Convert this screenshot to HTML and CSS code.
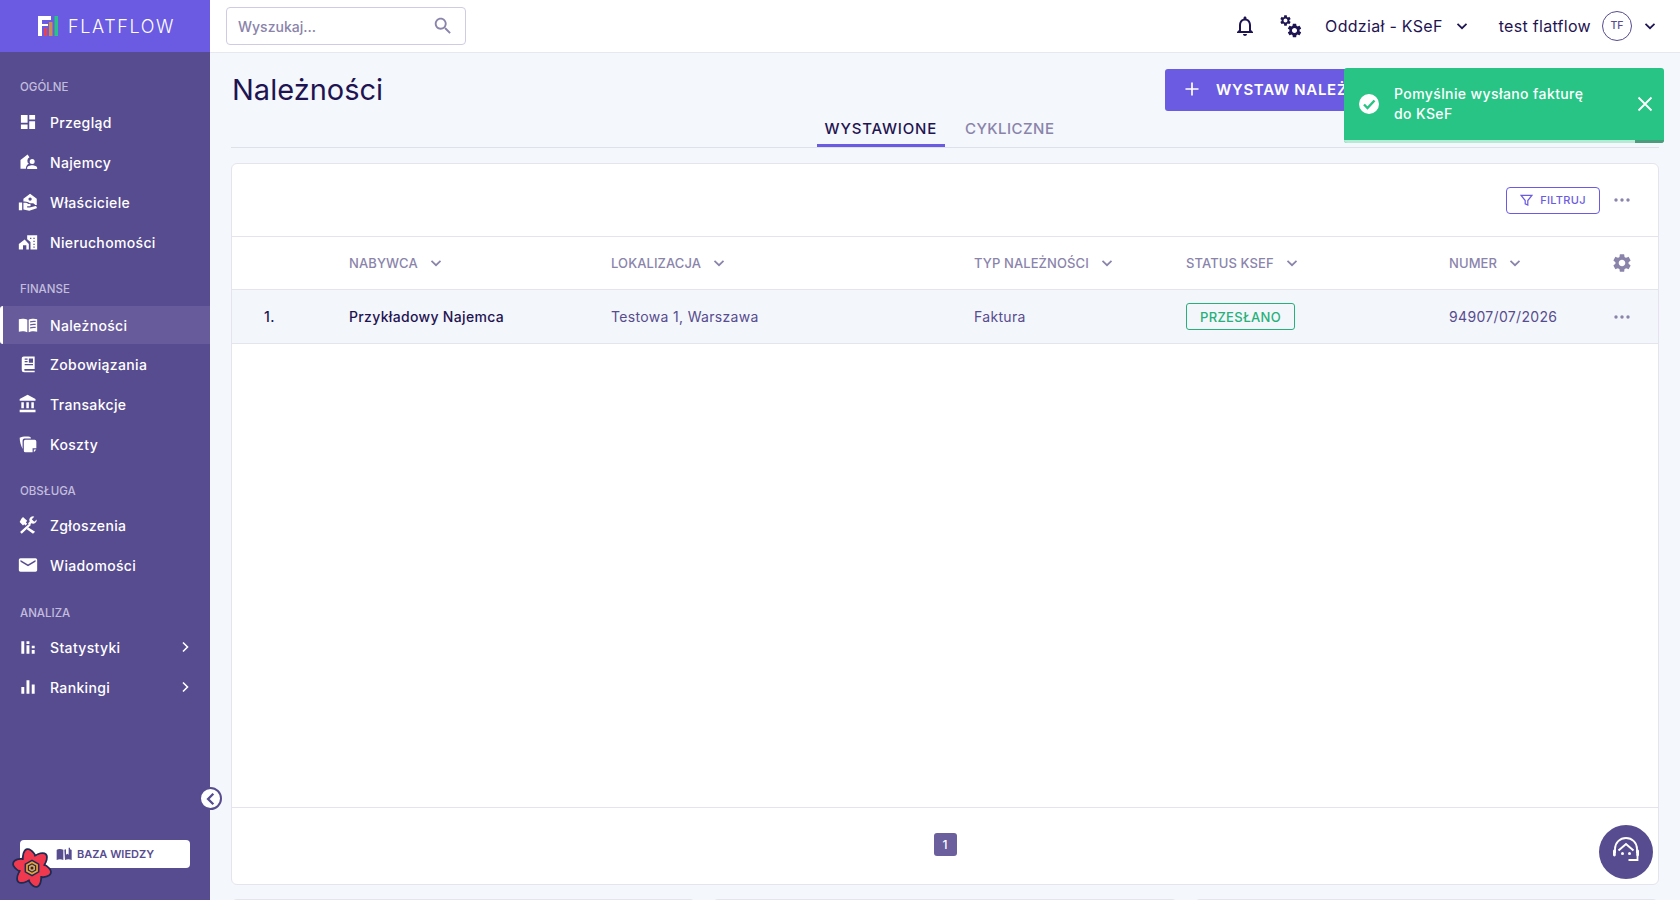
FILE: index.html
```html
<!DOCTYPE html>
<html lang="pl">
<head>
    <meta charset="UTF-8">
    <title>Flatflow - Należności</title>
    <link rel="stylesheet" href="styles.css">
</head>
<body>

<svg class="defs" width="0" height="0">
    <symbol id="gear" viewBox="0 0 24 24"><path fill-rule="evenodd" d="M19.14 12.94c.04-.3.06-.61.06-.94 0-.32-.02-.64-.07-.94l2.03-1.58c.18-.14.23-.41.12-.61l-1.92-3.32c-.12-.22-.37-.29-.59-.22l-2.39.96c-.5-.38-1.03-.7-1.62-.94l-.36-2.54c-.04-.24-.24-.41-.48-.41h-3.84c-.24 0-.43.17-.47.41l-.36 2.54c-.59.24-1.13.57-1.62.94l-2.39-.96c-.22-.08-.47 0-.59.22L2.74 8.87c-.12.21-.08.47.12.61l2.03 1.58c-.05.3-.09.63-.09.94s.02.64.07.94l-2.03 1.58c-.18.14-.23.41-.12.61l1.92 3.32c.12.22.37.29.59.22l2.39-.96c.5.38 1.03.7 1.62.94l.36 2.54c.05.24.24.41.48.41h3.84c.24 0 .44-.17.47-.41l.36-2.54c.59-.24 1.13-.56 1.62-.94l2.39.96c.22.08.47 0 .59-.22l1.92-3.32c.12-.22.07-.47-.12-.61l-2.01-1.58zM12 15.6c-1.98 0-3.6-1.62-3.6-3.6s1.62-3.6 3.6-3.6 3.6 1.62 3.6 3.6-1.62 3.6-3.6 3.6z"/></symbol>
    <symbol id="chev" viewBox="0 0 12 12"><path d="M1.500 3.800 6 8.200l4.500-4.400" fill="none" stroke="currentColor" stroke-width="1.700"/></symbol>
    <symbol id="dots" viewBox="0 0 16 4"><circle cx="2" cy="2" r="1.700"/><circle cx="8" cy="2" r="1.700"/><circle cx="14" cy="2" r="1.700"/></symbol>
    <symbol id="book" viewBox="0 0 24 24"><path d="M11.200 5.600C9 4.500 4 4 1 5.200V20c3-1 8-.8 10.200.8z"/><path fill-rule="evenodd" d="M12.800 5.600C15 4.500 20 4 23 5.200V20c-3-1-8-.8-10.200.8zM14.500 7.400v1.600c1.800-.7 4.500-.9 6.700-.5V7c-2.200-.4-4.900-.2-6.700.4zm0 3.600v1.600c1.800-.7 4.500-.9 6.700-.5v-1.500c-2.200-.4-4.900-.2-6.700.4zm0 3.600v1.600c1.800-.7 4.500-.9 6.700-.5v-1.500c-2.200-.4-4.900-.2-6.700.4z"/></symbol>
</svg>

<div class="app">
    <aside class="sidebar">
        <div class="logo">
            <svg class="logo-mark" width="20" height="20" viewBox="0 0 20 20">
                <path fill="#fff" d="M0 0h13v4H4v4h6v2H4v10H0z"/>
                <rect x="6" y="12" width="3" height="8" fill="#e8424f"/>
                <rect x="11" y="6" width="3.500" height="14" fill="#cf8a4c"/>
                <rect x="16.500" y="0" width="3.500" height="20" fill="#27c485"/>
            </svg>
            <span class="logo-text">FLATFLOW</span>
        </div>

        <nav class="nav">
            <div class="nav-label nav-label-first">OGÓLNE</div>
            <a class="nav-item">
                <svg class="nav-icon" viewBox="0 0 24 24"><path d="M3.500 3.500h8v9.500h-8zm0 11.500h8v5.500h-8zM13.500 3.500h7v5.500h-7zm0 7.500h7v9.500h-7z"/></svg>
                Przegląd
            </a>
            <a class="nav-item">
                <svg class="nav-icon" viewBox="0 0 24 24"><path d="M11.500 3 3 9.500V20h6.500c0-2.800 1.200-4.700 3.500-5.800a4.600 4.600 0 0 1 .8-7.800L11.500 3zM17 8.500a3 3 0 1 0 0 6 3 3 0 0 0 0-6zM11 20.500h12v-1.500c0-2-3.300-3.200-6-3.200s-6 1.200-6 3.200z"/></svg>
                Najemcy
            </a>
            <a class="nav-item">
                <svg class="nav-icon" viewBox="0 0 24 24"><path d="m14.500 2-8 6v3.500c3-.5 6 .5 7.500 2h3c1.500 0 3 .8 3.500 2h2V8zm0 4.500a2 2 0 1 1 0 4 2 2 0 0 1 0-4zM1 12.500h4V22H1zM6.500 13v8l7 1.500 9-3V18c-.5-1-1.500-1.200-2.500-1l-6 1.500h-3V17h3.500c1 0 1.200-2.500-.5-2.500h-1.500C11 13 9 12.500 6.500 13z"/></svg>
                Właściciele
            </a>
            <a class="nav-item">
                <svg class="nav-icon" viewBox="0 0 24 24"><path d="M8 9 1 14.500V21h5v-5h4v5h3v-6.500zM11 4v4.800l4 3.200v9h8V4zm3.500 3H16v1.500h-1.500zm4 0H20v1.500h-1.500zm0 3.500H20V12h-1.500zm0 3.500H20v1.500h-1.500zm0 3.500H20v1.500h-1.500z"/></svg>
                Nieruchomości
            </a>

            <div class="nav-label">FINANSE</div>
            <a class="nav-item active">
                <svg class="nav-icon" viewBox="0 0 24 24"><use href="#book"/></svg>
                Należności
            </a>
            <a class="nav-item">
                <svg class="nav-icon" viewBox="0 0 24 24"><path fill-rule="evenodd" d="M7 3h13v15H8.500c-1.500 0-1.500 2 0 2H20v2H7.500C5.500 22 4.500 21 4.500 19V5.500C4.500 4 5.500 3 7 3zm6 2.500v5h5v-5zm-5 0V7h3.500V5.500zm0 3V10h3.500V8.500zm0 3.500v1.500h10V12z"/></svg>
                Zobowiązania
            </a>
            <a class="nav-item">
                <svg class="nav-icon" viewBox="0 0 24 24"><path d="M4 10v7h3v-7H4zm6 0v7h3v-7h-3zM2 22h19v-3H2v3zm14-12v7h3v-7h-3zm-4.500-9L2 6v2h19V6l-9.500-5z"/></svg>
                Transakcje
            </a>
            <a class="nav-item">
                <svg class="nav-icon" viewBox="0 0 24 24"><path d="M9 7h11a2 2 0 0 1 2 2v8h-4.500v5H9a2 2 0 0 1-2-2V9a2 2 0 0 1 2-2zM19 18.500h3L19 22z"/><path d="M2 4.500C5 3 10 2.500 15 3.500L15.500 5.500H8C6 5.500 5.500 7 5.500 9v9C3.500 14 2 9 2 4.500z"/></svg>
                Koszty
            </a>

            <div class="nav-label">OBSŁUGA</div>
            <a class="nav-item">
                <svg class="nav-icon" viewBox="0 0 24 24"><path d="m4 4.500 2-2 5 4.500-1.500 2L11 10.500l-2 2-1.500-1.500L6 12.500 2 8.500zM14 10 2.500 20.500l2 2L15.500 12zM18 1.500a4.500 4.500 0 0 0-4 6.500l-2 2 2 2 2-2a4.500 4.500 0 0 0 6.500-4.500L19.500 8 16.500 5 19.500 2zM12.500 15l-2 2 7.500 5.500 2.500-2.500z"/></svg>
                Zgłoszenia
            </a>
            <a class="nav-item">
                <svg class="nav-icon" viewBox="0 0 24 24"><path d="M21 4H3c-1.100 0-2 .9-2 2v12c0 1.100.9 2 2 2h18c1.100 0 2-.9 2-2V6c0-1.100-.9-2-2-2zm0 4-9 5.500L3 8V6l9 5.500L21 6v2z"/></svg>
                Wiadomości
            </a>

            <div class="nav-label nav-label-last">ANALIZA</div>
            <a class="nav-item">
                <svg class="nav-icon" viewBox="0 0 24 24"><path d="M4 5h3.500v15H4zm6.200 5h3.500v10h-3.500zm0-5h3.500v3.500h-3.500zm6.300 5.500H20v3h-3.500zm0 5H20V20h-3.500z"/></svg>
                Statystyki
                <svg class="nav-arrow" width="12" height="12" viewBox="0 0 12 12"><path d="M4 1.500 8.500 6 4 10.500" fill="none" stroke="#fff" stroke-width="1.600"/></svg>
            </a>
            <a class="nav-item">
                <svg class="nav-icon" viewBox="0 0 24 24"><path d="M4 12h3.500v8H4zm6.200-8h3.500v16h-3.500zm6.300 5H20v11h-3.500z"/></svg>
                Rankingi
                <svg class="nav-arrow" width="12" height="12" viewBox="0 0 12 12"><path d="M4 1.500 8.500 6 4 10.500" fill="none" stroke="#fff" stroke-width="1.600"/></svg>
            </a>
        </nav>

        <button class="kb-btn">
            <svg width="16" height="16" viewBox="0 0 24 24"><path d="M1 6c2-1.500 6-2 10-.5V21c-3-1.500-7-1.500-10 0zm11.500-.5c.8-.3 1.700-.5 2.500-.6V13l2-1.500 2 1.500V2.500h2V5c.8.200 1.500.5 2.500 1v15c-3-1.500-7-1.500-10 0z"/></svg>
            BAZA WIEDZY
        </button>

        <button class="collapse-btn">
            <svg width="14" height="14" viewBox="0 0 12 12"><path d="M8 1.500 3.500 6 8 10.500" fill="none" stroke="#574c8f" stroke-width="2"/></svg>
        </button>

        <svg class="devtools" width="42" height="40" viewBox="-21 -20 42 40">
            <g fill="#f0384e" stroke="#1e2a52" stroke-width="1.800">
                <ellipse rx="19.500" ry="8" transform="rotate(15)"/>
                <ellipse rx="19.500" ry="8" transform="rotate(75)"/>
                <ellipse rx="19.500" ry="8" transform="rotate(135)"/>
            </g>
            <g fill="#f0384e">
                <ellipse rx="18" ry="6.800" transform="rotate(15)"/>
                <ellipse rx="18" ry="6.800" transform="rotate(75)"/>
                <ellipse rx="18" ry="6.800" transform="rotate(135)"/>
            </g>
            <path d="M0-8.500 7.400-4.200v8.400L0 8.500-7.400 4.200v-8.400z" fill="#1e2a52"/>
            <path d="M0-6.800 5.900-3.400v6.800L0 6.800-5.900 3.400v-6.800z" fill="#e9a33f"/>
            <path d="M0-4.800 4.200-2.400v4.800L0 4.800-4.200 2.400v-4.800z" fill="#1e2a52"/>
            <path d="M0-3.400 3-1.700v3.400L0 3.400-3 1.700v-3.400z" fill="#e9a33f"/>
            <circle r="1.500" fill="#1e2a52"/>
        </svg>
    </aside>

    <div class="main">
        <header class="topbar">
            <div class="search">
                <span>Wyszukaj...</span>
                <svg width="22" height="22" viewBox="0 0 24 24"><path d="M15.500 14h-.79l-.28-.27C15.410 12.590 16 11.110 16 9.500 16 5.910 13.090 3 9.500 3S3 5.910 3 9.500 5.910 16 9.500 16c1.610 0 3.090-.59 4.230-1.570l.27.280v.79l5 4.990L20.490 19l-4.990-5zm-6 0C7.010 14 5 11.990 5 9.500S7.010 5 9.500 5 14 7.010 14 9.500 11.990 14 9.500 14z"/></svg>
            </div>
            <div class="top-right">
                <svg class="bell" width="24" height="24" viewBox="0 0 24 24"><path d="M12 22c1.100 0 2-.9 2-2h-4c0 1.100.9 2 2 2zm6-6v-5c0-3.070-1.630-5.640-4.500-6.320V4c0-.83-.67-1.500-1.500-1.500s-1.500.67-1.500 1.500v.68C7.640 5.360 6 7.920 6 11v5l-2 2v1h16v-1l-2-2zm-2 1H8v-6c0-2.480 1.510-4.500 4-4.500s4 2.020 4 4.500v6z"/></svg>
                <span class="gears">
                    <svg class="gear-small" width="13" height="13"><use href="#gear"/></svg>
                    <svg class="gear-big" width="17" height="17"><use href="#gear"/></svg>
                </span>
                <span class="top-text branch">Oddział - KSeF</span>
                <svg class="top-chev" width="12" height="12"><use href="#chev"/></svg>
                <span class="top-text user">test flatflow</span>
                <span class="avatar">TF</span>
                <svg class="top-chev" width="12" height="12"><use href="#chev"/></svg>
            </div>
        </header>

        <div class="content">
            <div class="page-head">
                <h1>Należności</h1>
                <button class="primary-btn">
                    <svg width="16" height="16" viewBox="0 0 16 16"><path d="M8 1.500v13M1.500 8h13" stroke="#fff" stroke-width="1.700"/></svg>
                    WYSTAW NALEŻNOŚĆ
                </button>
            </div>

            <div class="tabs">
                <a class="tab active">WYSTAWIONE</a>
                <a class="tab">CYKLICZNE</a>
            </div>

            <section class="card">
                <div class="toolbar">
                    <button class="filter-btn">
                        <svg width="13" height="13" viewBox="0 0 14 14"><path d="M1.200 1.500h11.600L8.400 7v5l-2.800-1.400V7z" fill="none" stroke="#6a5be2" stroke-width="1.300"/></svg>
                        FILTRUJ
                    </button>
                    <svg class="dots" width="16" height="4"><use href="#dots"/></svg>
                </div>

                <div class="tbl-row tbl-head">
                    <div></div>
                    <div class="th">NABYWCA <svg width="12" height="12"><use href="#chev"/></svg></div>
                    <div class="th">LOKALIZACJA <svg width="12" height="12"><use href="#chev"/></svg></div>
                    <div class="th">TYP NALEŻNOŚCI <svg width="12" height="12"><use href="#chev"/></svg></div>
                    <div class="th">STATUS KSEF <svg width="12" height="12"><use href="#chev"/></svg></div>
                    <div class="th">NUMER <svg width="12" height="12"><use href="#chev"/></svg></div>
                    <div class="cell-action"><svg width="22" height="22"><use href="#gear"/></svg></div>
                </div>

                <div class="tbl-row tbl-body">
                    <div class="td-strong">1.</div>
                    <div class="td-strong">Przykładowy Najemca</div>
                    <div>Testowa 1, Warszawa</div>
                    <div>Faktura</div>
                    <div><span class="badge">PRZESŁANO</span></div>
                    <div>94907/07/2026</div>
                    <div class="cell-action"><svg width="16" height="4"><use href="#dots"/></svg></div>
                </div>

                <div class="tbl-empty"></div>

                <div class="pager"><span class="page-num">1</span></div>
            </section>

            <div class="bottom-cards">
                <div class="mini-card"></div>
                <div class="mini-card"></div>
                <div class="mini-card"></div>
            </div>
        </div>
    </div>
</div>

<div class="toast">
    <div class="toast-body">
        <svg width="22" height="22" viewBox="0 0 22 22"><circle cx="11" cy="11" r="10" fill="#fff"/><path d="m6 11.500 3.500 3.500 7-7.500" fill="none" stroke="#27c485" stroke-width="2.400"/></svg>
        <p>Pomyślnie wysłano fakturę<br>do KSeF</p>
        <svg class="toast-close" width="18" height="18" viewBox="0 0 18 18"><path d="m2.500 2.500 13 13m0-13-13 13" stroke="#fff" stroke-width="1.800"/></svg>
    </div>
    <div class="toast-progress"></div>
</div>

<button class="support">
    <svg width="36" height="36" viewBox="0 0 36 36">
        <path d="M7 19v-4a11 11 0 0 1 22 0v4" fill="none" stroke="#fff" stroke-width="1.800"/>
        <path d="M10.500 16.500 18 10l7.500 6.500" fill="none" stroke="#fff" stroke-width="2"/>
        <rect x="5" y="15.500" width="2.800" height="7" rx="1.400" fill="#fff"/>
        <rect x="28.200" y="15.500" width="2.800" height="7" rx="1.400" fill="#fff"/>
        <circle cx="14.500" cy="19.500" r="1.500" fill="#fff"/>
        <circle cx="21.500" cy="19.500" r="1.500" fill="#fff"/>
        <path d="M29.500 21.500v4.500h-9" fill="none" stroke="#fff" stroke-width="1.800"/>
    </svg>
</button>

</body>
</html>
```

FILE: styles.css
```css
* {
    box-sizing: border-box;
}
html, body {
    margin: 0;
    height: 100%;
    overflow: hidden;
}
body {
    font-family: 'Inter', 'Noto Sans', sans-serif;
    background-color: #f4f7fb;
    color: #1f1452;
}
button {
    font-family: inherit;
    cursor: pointer;
}
.defs {
    position: absolute;
}
.app {
    display: flex;
    height: 900px;
}

/* sidebar */
.sidebar {
    position: relative;
    width: 210px;
    flex: none;
    display: flex;
    flex-direction: column;
    background-color: #574c8f;
}
.logo {
    height: 52px;
    display: flex;
    align-items: center;
    padding-left: 38px;
    gap: 10px;
    background-color: #6a5be2;
}
.logo-text {
    color: #fff;
    font-size: 18px;
    font-weight: 300;
    letter-spacing: 1.6px;
}
.nav {
    display: flex;
    flex-direction: column;
}
.nav-label {
    height: 16px;
    line-height: 18px;
    margin: 17px 0 0 20px;
    font-size: 11.5px;
    font-weight: 500;
    color: #c2bdde;
}
.nav-label-first {
    margin-top: 26px;
    margin-bottom: 1px;
}
.nav-label-last {
    margin-top: 18px;
}
.nav-item {
    height: 40px;
    display: flex;
    align-items: center;
    padding-left: 18px;
    padding-bottom: 2px;
    font-size: 14px;
    font-weight: 500;
    color: #fff;
    letter-spacing: 0.35px;
}
.nav-label + .nav-item {
    margin-top: 8px;
}
.nav-item.active {
    height: 38px;
    margin: 10px 0 1px;
    background-color: #675b9b;
    border-left: 3px solid #fff;
    border-radius: 3px 0 0 3px;
    padding-left: 15px;
    padding-bottom: 0;
}
.nav-icon {
    width: 20px;
    height: 20px;
    margin-right: 12px;
    fill: #fff;
    flex: none;
}
.nav-arrow {
    margin-left: auto;
    margin-right: 19px;
}
.kb-btn {
    margin: auto 20px 32px;
    height: 28px;
    display: flex;
    align-items: center;
    justify-content: center;
    gap: 5px;
    padding: 0;
    background: #fff;
    border: none;
    border-radius: 4px;
    font-size: 11px;
    font-weight: 600;
    color: #574c8f;
}
.kb-btn svg {
    fill: #574c8f;
}
.collapse-btn {
    position: absolute;
    right: -12px;
    top: 787px;
    width: 23px;
    height: 23px;
    padding: 0;
    display: flex;
    align-items: center;
    justify-content: center;
    background: #fff;
    border: 2px solid #574c8f;
    border-radius: 50%;
    z-index: 3;
}
.devtools {
    position: absolute;
    left: 11px;
    top: 848px;
}

/* top bar */
.main {
    flex: 1;
    min-width: 0;
    display: flex;
    flex-direction: column;
}
.topbar {
    height: 53px;
    flex: none;
    display: flex;
    align-items: center;
    justify-content: space-between;
    padding: 0 24px 1px 16px;
    background: #fff;
    border-bottom: 1px solid #e6e8f0;
}
.search {
    width: 240px;
    height: 38px;
    display: flex;
    align-items: center;
    justify-content: space-between;
    padding: 0 11px;
    border: 1px solid #cfcbe2;
    border-radius: 4px;
    font-size: 14px;
    font-weight: 500;
    color: #8a84ab;
}
.search span {
    padding-top: 2px;
}
.search svg {
    fill: #8a84ab;
}
.top-right {
    display: flex;
    align-items: center;
}
.bell {
    fill: #1f1452;
}
.gears {
    position: relative;
    width: 24px;
    height: 24px;
    margin: 0 22px;
    fill: #1f1452;
}
.gear-small {
    position: absolute;
    left: 0;
    top: 0;
}
.gear-big {
    position: absolute;
    right: 0;
    bottom: -1px;
}
.top-text {
    font-size: 16px;
    font-weight: 400;
    letter-spacing: 0.3px;
}
.top-chev {
    color: #1f1452;
    margin-left: 13px;
}
.user {
    margin-left: 31px;
    margin-right: 11px;
}
.avatar {
    width: 30px;
    height: 30px;
    display: flex;
    align-items: center;
    justify-content: center;
    border: 1px solid #574c8f;
    border-radius: 50%;
    font-size: 10.5px;
    font-weight: 500;
    color: #574c8f;
}
.avatar + .top-chev {
    margin-left: 12px;
}

/* content */
.content {
    flex: 1;
    padding: 16px 21px 0 21px;
}
.page-head {
    height: 42px;
    display: flex;
    align-items: center;
    justify-content: space-between;
}
h1 {
    margin: 0;
    padding: 0 0 2px 1px;
    font-size: 29px;
    font-weight: 400;
    color: #1f1452;
}
.primary-btn {
    width: 494px;
    height: 42px;
    display: flex;
    align-items: center;
    gap: 16px;
    padding: 0 0 2px 19px;
    background-color: #6a5be2;
    border: none;
    border-radius: 3px;
    color: #fff;
    font-size: 15px;
    font-weight: 600;
    letter-spacing: 0.7px;
}
.tabs {
    height: 37px;
    display: flex;
    justify-content: center;
    gap: 12px;
    padding-right: 11px;
    border-bottom: 1px solid #dfe1ea;
}
.tab {
    height: 36px;
    padding: 8px 8px 0;
    font-size: 15px;
    font-weight: 500;
    letter-spacing: 0.45px;
    color: #8a84ab;
}
.tab.active {
    letter-spacing: 0.8px;
    color: #1f1452;
    border-bottom: 3px solid #6a5be2;
}
.card {
    height: 722px;
    margin-top: 15px;
    display: flex;
    flex-direction: column;
    background: #fff;
    border: 1px solid #e4e4ef;
    border-radius: 6px;
}
.toolbar {
    height: 73px;
    flex: none;
    display: flex;
    align-items: center;
    justify-content: flex-end;
    gap: 14px;
    padding: 0 28px 0 0;
    border-bottom: 1px solid #e4e4ef;
}
.dots {
    fill: #8a84ab;
}
.filter-btn {
    width: 94px;
    height: 27px;
    display: flex;
    align-items: center;
    justify-content: center;
    gap: 7px;
    padding: 0;
    background: #fff;
    border: 1px solid #6a5be2;
    border-radius: 4px;
    font-size: 11px;
    font-weight: 500;
    letter-spacing: 0.3px;
    color: #6a5be2;
}
.tbl-row {
    display: grid;
    grid-template-columns: 85px 262px 363px 212px 263px 151px 44px;
    align-items: center;
    padding-left: 32px;
    border-bottom: 1px solid #e4e4ef;
}
.tbl-head {
    height: 53px;
    font-size: 13px;
    letter-spacing: 0.1px;
}
.th {
    display: flex;
    align-items: center;
    gap: 12px;
    font-weight: 500;
    color: #8a84ab;
}
.tbl-body {
    height: 54px;
    background-color: #f3f6fa;
    font-size: 14px;
    letter-spacing: 0.33px;
    color: #574c8f;
}
.td-strong {
    color: #1f1452;
    font-weight: 500;
}
.cell-action {
    display: flex;
    justify-content: center;
    fill: #8a84ab;
}
.badge {
    display: inline-flex;
    align-items: center;
    justify-content: center;
    width: 109px;
    height: 27px;
    border: 1px solid #27b07a;
    border-radius: 3px;
    font-size: 13px;
    font-weight: 500;
    letter-spacing: 0.3px;
    color: #27b07a;
}
.tbl-empty {
    flex: 1;
}
.pager {
    height: 77px;
    flex: none;
    display: flex;
    align-items: center;
    justify-content: center;
    padding-bottom: 4px;
    border-top: 1px solid #e4e4ef;
}
.page-num {
    width: 23px;
    height: 23px;
    display: flex;
    align-items: center;
    justify-content: center;
    background-color: #6b5f9e;
    border-radius: 3px;
    color: #fff;
    font-size: 12px;
    font-weight: 500;
}
.bottom-cards {
    display: grid;
    grid-template-columns: repeat(3, 1fr);
    gap: 16px;
    margin-top: 14px;
}
.mini-card {
    height: 40px;
    background: #fff;
    border: 1px solid #e4e4ef;
    border-radius: 6px;
}

/* overlays */
.toast {
    position: absolute;
    left: 1344px;
    top: 68px;
    width: 320px;
    height: 75px;
    display: flex;
    flex-direction: column;
    background-color: #27c485;
    border-radius: 3px;
    overflow: hidden;
    z-index: 5;
}
.toast-body {
    flex: 1;
    display: flex;
    align-items: center;
    padding: 0 10px 0 14px;
    color: #fff;
}
.toast-body p {
    margin: 0 0 0 14px;
    font-size: 14px;
    font-weight: 500;
    line-height: 20px;
    letter-spacing: 0.4px;
}
.toast-close {
    margin-left: auto;
}
.toast-progress {
    height: 3px;
    background: linear-gradient(to right, #b5ebd4 91%, #4a9c7c 91%);
}
.support {
    position: absolute;
    left: 1599px;
    top: 825px;
    width: 54px;
    height: 54px;
    display: flex;
    align-items: center;
    justify-content: center;
    padding: 0;
    background-color: #574c8f;
    border: none;
    border-radius: 50%;
    z-index: 5;
}
```
